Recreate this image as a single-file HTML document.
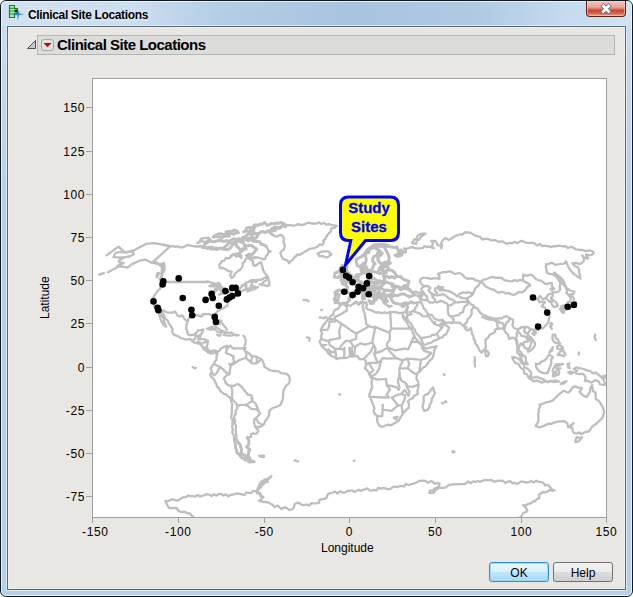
<!DOCTYPE html>
<html><head><meta charset="utf-8">
<style>
html,body{margin:0;padding:0;width:633px;height:597px;overflow:hidden;background:#fff;font-family:"Liberation Sans",sans-serif;}
.abs{position:absolute;}
#win{position:absolute;left:0;top:0;width:631px;height:595px;border:1px solid #101822;border-radius:6px 6px 6px 6px;
 background:linear-gradient(180deg,#d0e0f1 0px,#c4d9ee 60px,#b5d0ea 200px,#b5d0ea 100%);overflow:hidden;}
#tbar{position:absolute;left:1px;top:1px;width:629px;height:24px;background:linear-gradient(95deg,#d2e2f2 0%,#cadcef 22%,#b4cde6 35%,#a9c4df 55%,#afc9e3 75%,#c6dbef 90%,#d2e3f3 100%);}
#hl{position:absolute;left:0;top:0;width:629px;height:593px;border:1px solid #eaf3fc;border-radius:5px;}
#client{position:absolute;left:7px;top:26px;width:617px;height:562px;border:1px solid #5a6878;background:#e8e7e4;box-shadow:0 0 0 1px #dce9f6;}
#client-hl{position:absolute;left:0;top:0;width:615px;height:560px;border:1px solid #f1efea;}
#ttl{position:absolute;text-shadow:0 0 6px #e6f0fa,0 0 3px #eef5fc;left:28px;top:8px;font-size:12px;font-weight:bold;letter-spacing:-0.35px;color:#000;white-space:nowrap;}
#close{position:absolute;left:586px;top:1px;width:38px;height:15px;border:1px solid #5e2015;border-top:none;border-radius:0 0 4px 4px;box-shadow:inset 0 0 0 1px rgba(255,215,205,0.55);background:linear-gradient(180deg,#f0c4bc 0%,#e6a79c 40%,#d66d5a 55%,#c8452e 62%,#d0604a 80%,#e4a090 100%);}
#hdr{position:absolute;left:37px;top:35px;width:576px;height:18px;border:1px solid #b5b5b3;background:#dcdcda;}
#rtitle{position:absolute;left:57px;top:36px;font-size:15px;font-weight:bold;letter-spacing:-0.5px;color:#000;white-space:nowrap;}
#plot{position:absolute;left:92px;top:78px;width:513px;height:438px;border:1px solid #a0a0a0;background:#fff;}
.yl{position:absolute;font-size:12px;color:#000;text-align:right;width:40px;letter-spacing:0.6px;}
.xl{position:absolute;font-size:12px;color:#000;text-align:center;width:40px;letter-spacing:0.6px;text-indent:0.6px;}
.btn{position:absolute;top:562px;width:58px;height:18px;border:1px solid #707070;border-radius:3px;font-size:12px;text-align:center;line-height:18px;color:#000;}
</style></head><body>
<div id="win"><div id="tbar"></div><div id="hl"></div></div>
<div id="client"><div id="client-hl"></div></div>
<div id="ttl">Clinical Site Locations</div>
<div id="close"></div>
<div id="hdr"></div>
<svg class="abs" style="left:0;top:0" width="633" height="60">
<!-- window icon -->
<defs><linearGradient id="mint" x1="0" y1="0" x2="1" y2="0"><stop offset="0" stop-color="#c8f8b8"/><stop offset="1" stop-color="#70e8a8"/></linearGradient></defs>
<path d="M9.5 5.5 H14.5 V8.5 H17.5 V13.5 H14.5 V17.5 H9.5 Z" fill="url(#mint)" stroke="#0c8a1c" stroke-width="1.2"/>
<path d="M10 8.2h4.5M10 11h7M10 14h4.5" stroke="#0c8a1c" stroke-width="1.1"/>
<circle cx="16" cy="11" r="1.4" fill="#000"/>
<path d="M12.6 14.8 L17.4 13.7 L19.3 10.2 L19.1 13.6 L24.4 14.1 L19.1 15.1 L17.5 20.8 L17.5 15.3 Z" fill="#2f7fdc"/>
<!-- close X -->
<path d="M603.4 6 L608.6 11.4 M608.6 6 L603.4 11.4" stroke="#6a6a74" stroke-width="4.4" stroke-linecap="square"/>
<path d="M603.4 6 L608.6 11.4 M608.6 6 L603.4 11.4" stroke="#ffffff" stroke-width="2.8" stroke-linecap="square"/>
<!-- disclosure triangle -->
<path d="M27.5 48.5 L35.5 40.5 L35.5 48.5 Z" fill="#c8c8c8" stroke="#505050" stroke-width="1"/>
<!-- red triangle button -->
<rect x="41.5" y="39.5" width="12" height="11" rx="2.5" fill="#e2e2e0" stroke="#a8a8a8" stroke-width="1"/>
<path d="M43.5 43 L51.5 43 L47.5 47.3 Z" fill="#d00000"/>
</svg>

<div id="rtitle">Clinical Site Locations</div>
<div id="plot"></div>
<svg id="map" width="513" height="438" viewBox="0 0 513 438" style="position:absolute;left:93px;top:79px;overflow:hidden">
<path d="M77.0 167.4L79.9 167.1L82.6 167.9L84.9 167.2L87.0 168.4L89.4 168.4L91.7 167.5L94.4 165.9L97.5 166.7L100.2 167.2L102.8 167.5L105.4 167.5L108.1 167.0L110.5 168.6M138.0 177.1L136.4 179.4L133.0 178.8L131.5 181.5L129.0 182.2L126.3 185.7L127.0 189.2L129.7 189.0L132.1 190.0L135.1 192.1L138.6 192.6L137.2 196.1L138.6 199.0L140.7 197.8L141.5 195.3L143.3 193.5L145.1 191.9L147.1 190.9L149.8 187.4L149.6 184.0L151.8 182.5L152.7 180.0L155.0 179.2L157.3 180.2L160.1 182.2L160.2 186.0L162.5 186.9L165.9 184.1L168.3 183.4L168.8 185.9L169.6 188.3L170.2 191.7L171.7 194.0L173.5 196.1L174.8 197.8L171.8 198.7L169.6 200.0L167.2 200.9L165.0 200.8L162.8 201.6L160.6 200.9L157.5 201.3L155.4 203.2L152.7 203.8L150.9 205.6L148.6 206.6L150.7 205.7L152.5 204.2L154.5 203.2L156.8 202.6L159.2 202.6L159.2 204.7L157.7 206.8L161.6 208.5L163.0 208.9L164.8 208.0L161.9 209.9L159.4 210.6L156.9 211.4L154.6 212.5L154.8 210.4L157.6 209.0L153.5 209.9L149.8 211.6L147.7 212.3L146.3 214.0L146.9 215.4L144.3 216.1L142.1 216.9L139.9 217.5L139.2 219.6L136.5 220.6L134.7 223.7L134.3 226.8L131.8 228.1L130.0 229.5L127.9 230.3L124.1 232.4L122.6 234.6L123.2 238.6L123.6 241.5L122.4 244.1L121.2 244.3L120.5 241.9L119.6 239.3L119.6 236.7L118.2 235.7L115.1 235.1L111.9 235.0L109.3 235.5L109.3 237.4L106.4 237.0L104.2 236.2L101.9 236.4L99.8 237.2L97.4 238.2L95.3 239.8L94.7 242.9L93.3 246.2L93.2 249.7L94.3 252.3L94.7 255.2L96.9 256.2L101.2 255.5L104.0 253.5L104.7 251.4L107.5 251.1L110.4 250.5L109.0 254.0L107.9 255.7L107.3 257.4L106.5 260.0L110.7 260.2L113.9 261.4L115.0 261.9L114.3 266.1L113.8 268.7L115.6 271.3L118.1 272.5L120.7 271.3L123.3 271.8L124.4 273.0L126.7 271.6L127.7 269.5L130.3 268.3L133.8 266.6L134.5 268.7L133.7 270.4L136.3 267.8L137.2 266.8L140.4 269.5L143.9 269.4L147.3 269.4L150.7 269.2L152.2 272.8L155.6 273.9L157.2 275.6L158.9 277.3L162.3 277.3L164.2 278.7L166.5 279.1L169.1 280.8L170.7 284.6L171.5 287.7L174.1 289.4L177.0 291.1L180.1 292.0L183.2 292.0L186.1 292.7L188.5 294.2L191.3 294.3L194.0 295.2L196.1 297.2L196.9 300.7L195.8 304.5L193.3 306.7L190.9 310.2L190.2 313.6L190.1 318.0L189.7 320.1L189.0 322.3L187.6 325.7L184.4 327.5L181.1 328.5L178.5 329.8L176.4 331.8L176.1 336.1L174.1 339.6L172.1 342.2L171.3 344.6L169.6 346.5L167.4 347.9L164.7 347.7L161.9 347.5L163.9 349.9L165.4 350.8L164.5 353.7L162.5 354.9L160.1 354.4L158.0 355.1L158.2 357.7L154.3 358.6M141.2 359.4L140.8 356.3L139.2 353.4L139.9 350.8L139.2 348.2L139.4 345.6L139.6 343.0L139.5 340.7L138.1 338.5L138.4 336.1L138.9 333.5L138.8 330.9L138.8 328.0L139.2 325.1L138.2 322.3L137.7 319.3L134.6 317.1L133.1 315.4L130.8 314.8L129.0 313.4L127.3 311.9L126.2 309.5L124.0 307.7L123.3 305.0L121.9 302.4L120.5 299.8L118.4 298.0L117.2 295.5L118.9 292.0L117.6 289.4L119.3 286.8L121.1 284.8L121.9 282.4L123.7 280.8L123.3 278.1L124.3 275.6L122.3 273.0L119.7 274.7L117.2 274.4L114.7 273.0L112.8 271.3L110.5 270.4L110.2 268.7L107.6 265.4L105.1 264.4L101.0 263.5L99.7 262.6L97.2 260.0L92.9 260.6L89.6 259.5L87.4 259.0L85.7 257.4L81.7 256.1L80.0 254.4L79.0 252.3L79.7 250.4L78.2 247.6L76.8 245.9L75.6 244.0L74.6 241.5L72.7 239.8L70.8 235.8L68.7 232.9L68.0 235.8L69.8 238.4L71.0 240.4L71.0 242.7L72.6 246.2L73.1 247.9L72.0 247.1L69.6 244.8L68.4 242.3L67.4 239.6L66.8 237.5L66.1 235.3L65.5 231.5L64.3 228.9L61.3 227.9L60.9 224.4L61.0 222.3L60.7 218.9L60.4 217.9L62.4 215.1L64.9 211.6L66.7 210.1L67.6 207.8L69.0 204.0M67.7 186.6L65.1 184.3L63.0 183.2L60.7 184.0M166.8 205.4L169.1 204.8L170.6 202.8L172.8 201.9L174.8 198.5L175.7 200.7L176.3 203.0L176.5 205.6L175.1 207.0L171.7 206.4L169.2 206.1L166.8 205.4M159.1 207.1L161.9 207.7L160.3 207.8L159.1 207.1M160.3 201.6L164.0 202.5L162.1 202.8L160.3 201.6M179.1 155.4L181.7 156.9L184.3 157.6L187.4 155.8L189.9 157.2L191.0 160.1L190.3 163.2L191.7 165.6L191.6 168.4L190.8 170.6L188.9 171.9L187.4 173.6L188.3 176.7L189.6 179.6L192.1 180.7L194.7 181.6L196.0 184.3L197.8 182.2L200.0 180.5L201.1 178.5L203.0 177.2L204.3 175.3L207.0 175.8L209.2 174.3L211.4 173.1L214.1 171.5L216.7 169.8L219.5 169.4L222.2 168.8L224.7 167.5L226.6 165.5L229.4 165.8L230.9 163.9L230.2 161.5L232.3 160.3L233.2 158.0L235.6 154.6L237.9 152.4L238.2 149.4L241.4 148.8L243.8 146.8L241.1 146.5L238.5 145.9L235.9 145.1L233.2 145.7L231.1 143.8L228.4 145.0L226.1 143.3L223.6 144.6L221.1 144.3L218.5 144.5L216.0 143.7L213.3 144.5L210.7 145.6L208.1 146.1L205.2 145.1L202.6 146.3L199.9 146.6L197.2 146.1L194.5 145.9L192.3 148.1L188.9 146.7L186.6 148.5M226.7 177.4L224.6 174.5L228.1 172.9L230.7 172.4L233.2 172.4L235.8 172.7L237.5 174.8L238.7 175.3L236.6 176.5L234.6 178.3L231.8 178.1L229.4 176.8L226.7 177.4M169.8 180.5L172.4 179.9L172.9 177.3L174.5 175.7L175.3 173.3L177.7 172.6L175.4 171.6L174.5 169.5L173.4 167.5M162.0 178.8L164.4 178.4L166.7 179.0L168.9 179.6L169.8 180.5M143.3 177.1L146.2 177.2L148.5 179.1L148.1 176.5L146.3 174.5M106.3 163.2L108.4 162.0L110.9 162.7L113.3 162.9L115.2 161.0L117.5 160.6L115.2 158.7L112.2 159.1L109.4 159.2L107.5 160.5L106.4 163.2L104.2 164.1L106.3 163.2M114.0 249.8L116.6 248.7L119.2 247.6L121.8 247.4L124.1 248.6L127.1 250.9L129.3 251.7L131.5 252.8L128.8 253.5L125.9 253.3L123.5 252.2L122.2 250.0L117.9 250.5L114.0 249.8M130.7 255.9L133.8 253.3L136.1 253.9L138.5 253.6L141.0 255.5L138.8 256.6L136.5 256.6L133.6 256.3L130.7 255.9M124.2 255.9L127.6 256.2L126.3 256.9L124.2 255.9M143.0 255.9L145.6 256.1L143.2 256.6L143.0 255.9M126.9 241.4L128.5 241.9L127.0 245.3L126.4 244.1L126.9 241.4M150.3 256.8L151.9 258.1L152.2 259.7L152.6 261.4L152.8 262.8L152.3 264.9L151.4 266.8M150.9 269.2L152.4 269.0L152.3 270.2L150.8 270.2L150.9 269.2M99.6 288.0L101.9 289.3L103.0 288.9M129.6 244.5L130.2 246.2L132.5 248.3L133.8 251.0M166.2 376.7L168.6 377.2L170.9 376.4L170.9 378.1L167.0 377.6L166.2 376.7M201.6 381.4L205.0 382.4L203.9 382.1L201.6 381.4M124.3 274.0L123.3 275.3M133.8 267.3L133.4 269.5L133.5 271.7L132.9 273.9L135.6 275.0L138.2 276.3L140.9 277.3L140.2 279.6L141.1 282.0L140.2 284.2L137.3 286.0L136.5 284.8M121.1 285.1L124.4 286.8L127.3 288.0M118.9 293.8L121.2 296.3L122.9 294.7L124.5 292.9L125.6 290.3L127.3 288.0M127.3 288.0L129.6 289.8L131.4 292.0L133.7 293.9L136.6 295.0M136.6 295.0L136.8 292.7L137.0 290.5L137.5 288.3L137.3 286.0L139.7 285.7L141.6 284.2L144.2 282.4L146.8 280.8L149.9 279.9L152.8 278.7L154.8 280.6L156.8 282.4L158.7 284.2L161.3 284.6L163.9 284.2L166.0 282.3L168.2 280.4M152.8 278.7L153.4 275.9L153.9 273.0M158.9 277.3L158.9 279.6L158.1 281.9L158.7 284.2M164.0 277.8L163.6 280.9L163.9 283.9M136.6 295.0L134.2 296.1L132.2 297.6L130.8 299.8L132.1 301.8L132.7 304.1L134.4 305.5L136.2 306.7L137.9 306.7M137.9 306.7L140.4 306.8L142.5 306.1L144.6 305.0L147.2 306.6L149.3 308.6L151.0 311.0L153.0 313.3L154.8 315.7L158.2 316.2L159.3 318.7L159.2 321.4L158.4 322.5L156.3 323.9L154.1 325.3L151.6 325.7L149.0 325.9L146.6 326.2L144.2 327.1L143.2 324.4L141.1 322.3L139.5 320.4L138.9 318.0L139.3 313.6L139.2 311.3L138.6 309.0L137.9 306.7M137.7 319.3L138.9 318.0M144.2 327.1L144.3 329.6L142.6 331.8L142.8 334.4L141.3 336.8L141.2 339.6L142.2 341.8L141.6 344.3L142.9 346.5L142.9 349.1L142.7 351.7L143.1 354.3L143.4 356.9L143.4 359.4L144.3 361.6L145.5 363.8M151.6 325.7L153.8 326.4L155.7 327.6L157.4 329.3L159.6 330.1L162.7 330.2L165.4 331.8M158.2 316.2L158.6 318.8L159.2 321.4L160.6 323.1L162.6 324.4L163.4 326.6L164.7 329.1L165.4 331.8M165.4 331.8L167.2 334.7L165.5 336.2L164.1 337.9L162.6 339.6L161.7 339.9M161.7 339.9L164.1 340.9L165.1 343.6L167.3 344.8L169.5 346.0M161.7 339.9L160.8 342.7L161.5 345.6M284.4 165.8L287.6 164.8L291.0 165.1M310.1 172.7L312.9 173.6L312.6 171.1L311.0 169.3L314.1 169.8L316.9 168.5L319.7 168.2L322.6 169.3L326.4 169.3L330.0 168.9L331.5 167.0L333.7 168.0L336.2 167.7L338.5 168.4L340.8 169.3L338.8 167.2L340.2 163.9L338.2 161.8L342.4 161.8L343.6 163.9L344.7 166.1L347.7 166.7L348.3 169.3L349.2 166.6L348.1 164.1L350.4 160.6L352.8 159.1L355.6 161.1L358.0 159.8L360.0 158.5L361.9 157.1L364.1 156.3L366.6 155.5L369.4 155.6L371.4 153.5L374.4 153.5L377.3 153.7L380.0 155.3L382.3 156.7L385.0 157.3L387.5 158.3L389.2 160.6L391.6 159.9L393.9 159.8L396.2 160.4L398.4 161.5L400.8 161.2L403.1 161.4L405.3 162.9L407.7 162.4L410.1 162.7L412.1 164.1L414.3 164.9L416.7 163.8L419.2 164.1L421.5 163.0L424.1 164.1L426.2 162.9L428.3 161.8L430.8 162.7L432.8 163.8L435.2 163.8L437.4 164.1L439.9 163.7L442.1 164.9L444.3 166.6L447.0 164.8L449.0 167.2L451.6 166.6L453.9 167.2L456.1 167.2L458.3 168.2L460.6 167.0L462.8 167.4L465.5 166.7L467.8 166.9L470.1 167.5L472.4 167.2L475.0 169.0L478.1 167.8L480.9 168.8L482.8 170.3L485.1 170.6L487.3 171.0L489.7 171.0L491.8 171.9L494.2 171.8L496.6 171.4L498.8 172.0L501.0 173.4L499.6 175.3L496.4 176.5L493.1 175.3L493.5 177.8L495.2 179.6L492.8 179.1L490.6 178.2L489.1 176.2L491.2 179.6L490.6 182.2L488.8 184.0L486.1 185.1L483.3 184.0L479.4 184.1L480.8 186.2L482.7 187.5L485.0 188.3L486.0 190.9L486.2 193.7L486.9 196.4L487.5 199.5L485.0 198.1L482.9 196.1L480.7 194.6L478.9 192.9L477.2 190.9L475.3 187.8L474.1 185.0L473.0 182.2L471.7 184.3L469.3 184.8L466.8 185.2L464.3 185.3L462.1 186.0L459.9 184.0L457.6 183.9L455.4 185.1L453.1 185.2L452.9 188.3L453.7 190.8L453.7 193.5L456.4 195.1L459.6 195.2L463.0 197.5L464.6 199.4L466.0 201.6L467.2 203.8L466.8 208.2L467.1 210.7L465.3 212.5L463.2 213.3L460.9 213.4L458.9 214.6L459.9 216.8L458.3 218.5L458.0 219.4L459.9 220.8L461.7 222.3L463.5 223.7L464.9 226.8L460.9 228.1L458.9 225.8L458.4 222.9L456.2 222.5L454.7 220.7L453.3 218.9L449.7 220.3L447.1 217.0L444.8 219.9L442.8 220.3L445.6 220.7L446.5 223.4L449.3 222.6L452.0 223.2L450.0 225.5L448.8 227.2L451.8 228.5L453.1 231.5L455.9 233.8L456.6 237.6L455.8 240.2L455.2 243.6L453.7 245.6L451.8 247.1L450.1 249.4L447.2 249.1L445.3 251.2L442.5 250.5L441.6 252.6L440.1 250.4L437.5 250.5L435.8 253.1L434.6 255.2L436.2 257.4L438.4 258.7L439.8 260.9L441.6 263.4L442.0 266.4L440.3 269.0L437.9 271.3L435.1 272.8L435.3 270.4L432.7 269.5L430.7 267.0L427.7 264.5L426.4 267.0L425.4 270.4L427.5 273.0L429.7 275.9L432.8 278.5L432.9 281.0L433.4 283.4L434.7 285.3L433.1 285.1L429.7 282.9L428.8 280.7L427.8 278.7L426.7 275.9L424.4 273.9L424.2 270.4L424.5 267.8L423.8 265.2L423.3 262.0L421.6 259.2L418.8 258.7L416.3 260.0L415.5 257.9L415.1 255.7L413.2 254.0L411.7 251.9L410.0 248.8L408.0 249.7L404.6 249.7L402.2 250.5L401.8 253.1L398.7 254.9L396.5 256.0L395.4 258.3L392.3 260.9L392.6 265.2L393.0 267.6L392.3 269.9L390.2 271.5L388.6 273.7L386.4 271.3L385.3 268.6L383.8 266.1L382.1 264.4L382.2 261.8L380.7 260.0L380.4 257.2L379.0 254.9L378.4 251.4L377.9 249.1L374.7 251.7L371.7 249.1L373.4 248.1L370.8 247.1L368.0 244.8L367.0 243.8L364.3 243.7L361.6 243.6L358.9 244.1L356.5 243.3L353.9 244.0L351.6 243.1L349.6 240.8L345.9 241.5L343.6 240.5L341.3 239.5L339.0 235.8L336.0 235.8L335.3 236.9L336.8 238.9L338.3 241.0L341.0 244.5L342.1 242.9L341.7 245.3L344.0 246.2L346.4 246.0L348.3 244.7L349.4 242.7L350.0 242.2L350.3 245.0L354.0 246.9L356.4 248.8L354.6 252.3L353.2 255.2L350.9 256.3L349.3 258.3L346.8 259.3L344.4 260.6L341.2 261.5L338.6 263.5L335.6 264.3L332.8 265.6L329.9 265.7L329.6 263.2L328.6 260.9L326.4 257.4L324.5 255.4L322.7 253.3L321.7 250.5L320.0 248.8L319.0 246.6L318.0 244.5L315.5 242.2L314.1 239.1L313.9 236.7L313.5 239.3L312.0 239.6L309.9 236.0L309.2 233.6L312.7 233.2L313.2 230.6L314.4 228.1L314.0 226.3L314.0 224.1M309.9 236.0L309.2 233.6L305.4 233.8L302.7 233.2L299.9 233.2L297.2 232.9L294.6 234.1L291.7 233.3L289.1 234.3L286.7 233.5L284.1 233.5L281.6 233.1L279.6 232.0L277.5 231.0L275.0 230.3L272.8 228.4L274.0 226.0L273.1 223.7M261.1 224.1L259.2 225.6L257.3 226.8L254.7 226.0L252.3 226.7L250.1 224.9L247.8 225.6L246.3 228.1L244.7 229.9L242.4 230.6L240.8 232.4L240.2 235.8L237.9 236.7L236.6 238.7L234.8 240.2L233.5 242.3L231.9 244.2L230.4 246.2L228.8 248.7L227.8 251.4L229.0 254.0L228.3 257.0L228.4 260.0L226.6 262.3L227.9 266.1L230.2 268.7L233.3 271.3L234.8 273.6L236.7 275.6L238.8 277.3L241.6 278.0L243.5 280.1L246.0 279.2L248.6 279.0L251.2 279.1L253.5 278.9L255.7 277.7L258.0 277.5L261.0 277.3L264.0 276.8L266.6 280.3L270.8 279.9L272.6 281.6L273.1 286.0L271.7 289.4L273.9 291.0L275.4 293.0L276.5 295.5L279.0 298.1L279.1 300.7L278.5 303.3L278.7 305.9L279.4 308.4L278.1 310.9L277.1 313.5L276.3 316.2L277.4 318.2L278.0 320.5L278.9 322.6L279.8 324.8L280.6 326.9L281.5 329.3L280.6 332.0L281.5 334.4L283.3 336.3L284.3 338.7L284.2 341.5L284.8 344.0L286.1 346.5L288.6 347.9L292.8 346.5L295.3 345.7L297.8 346.5L299.8 345.2L301.9 344.1L304.1 342.6L306.1 341.0L307.3 338.7L308.7 336.5L310.2 334.4L311.7 332.4L313.4 330.6L315.6 329.2L315.9 324.9L314.8 322.3L317.8 319.9L320.0 319.1L321.1 316.8L323.2 315.9L324.9 314.5L324.5 311.6L325.3 308.7L325.5 305.9L325.1 302.6L323.4 299.8L323.9 295.7L324.9 293.5L327.2 292.4L328.2 290.3L329.9 288.8L332.0 287.7L333.5 286.0L335.0 284.2L336.4 281.7L338.9 280.0L340.1 277.3L340.9 274.8L341.1 272.1L342.0 269.5L343.6 267.3L340.8 267.8L338.0 268.3L335.5 269.1L333.0 269.7L330.0 267.8L328.5 265.2L326.1 263.3L324.1 260.9L322.2 259.1L321.3 256.6L319.9 254.1L318.9 251.4L317.4 248.8L315.8 247.3L314.7 245.3L313.7 242.9L311.8 241.0L310.1 238.8L309.9 236.0M294.2 226.3L296.3 228.1L298.7 226.8L295.9 227.4L294.2 226.3M308.5 227.2L312.0 226.2L310.5 227.9L308.5 227.2M328.6 210.8L328.2 210.2L328.9 208.9L331.6 207.3L334.4 206.8L337.4 209.0L335.4 211.1L336.9 213.2L338.9 214.7L339.6 218.5L340.0 216.0L340.3 218.5L342.0 220.4L342.5 222.9L339.8 223.5L337.1 223.7L334.2 221.3L334.2 217.7L332.5 216.1L331.0 214.2L329.8 212.5L328.6 210.8M345.2 207.3L347.5 208.5L350.1 208.2L348.9 211.6L346.3 210.8L345.2 207.3M268.3 152.0L270.9 150.9L273.3 149.4L275.7 148.9L278.1 149.0L280.4 148.5L282.8 149.0L281.8 151.5L279.2 152.0L277.4 154.6L274.3 155.3L272.7 153.3L270.0 153.6L268.3 152.0M319.1 164.1L321.0 160.6L323.7 159.5L324.6 156.6L327.1 155.3L329.7 154.7L332.4 154.7L330.1 156.4L327.8 158.0L326.4 160.4L323.8 161.5L323.1 164.9L319.1 164.1M473.2 208.2L471.9 205.7L471.0 203.0L469.8 200.7L468.0 199.1L466.2 197.4L464.3 195.9L462.4 194.3L461.2 193.8L462.2 196.1L463.7 198.1L465.8 199.5L467.5 201.9L469.1 204.4L471.2 206.4L473.2 208.2M475.5 216.0L473.5 214.1L474.2 211.3L472.9 209.2L475.1 209.9L477.0 211.4L479.2 212.0L481.5 212.5L480.3 215.1L476.6 215.4L475.5 216.0M477.3 216.3L479.5 217.4L480.9 219.4L480.9 222.0L483.1 223.4L482.9 226.0L482.0 227.2L480.7 227.9L477.8 227.9L476.3 229.8L474.6 227.9L471.6 228.4L468.6 228.9L468.0 227.5L470.6 226.3L474.9 226.0L474.8 223.0L477.4 222.9L477.8 219.4L476.1 216.8L477.3 216.3M467.0 229.8L469.8 229.8L471.0 233.6L469.6 233.8L467.6 231.0L467.0 229.8M471.6 230.3L474.6 228.9L474.5 230.1L472.8 231.0L471.6 230.3M457.2 247.9L457.8 244.0L459.5 244.7L457.9 247.1L458.8 249.8L457.2 247.9M439.4 254.3L442.1 252.9L443.1 253.8L441.0 256.2L439.4 254.3M459.3 259.2L459.7 255.7L462.4 255.7L462.7 259.2L464.9 260.2L465.6 262.6L466.9 264.4L462.6 263.8L460.7 262.6L459.3 259.2M464.7 275.6L466.3 273.7L468.0 272.0L470.3 270.9L470.8 273.3L472.5 275.1L470.8 277.3L468.1 276.1L464.7 275.8L464.7 275.6M463.9 267.3L467.1 266.1L470.0 268.7L466.8 270.4L464.2 269.5L463.9 267.3M456.3 273.2L459.2 271.5L459.7 268.2L458.8 269.9L456.3 273.2M442.9 284.6L446.3 285.1L447.5 283.1L449.7 282.2L452.0 281.0L453.8 279.1L456.1 275.6L458.4 276.7L459.8 278.7L458.2 280.3L458.3 284.2L457.5 286.8L456.5 288.9L455.7 291.2L454.8 293.8L452.2 294.3L449.6 293.9L447.1 292.9L444.6 290.3L443.0 287.7L442.9 284.6M419.2 278.0L423.0 278.7L425.5 279.7L427.3 281.4L428.3 283.9L430.8 285.1L431.3 288.5L434.0 289.4L435.9 291.2L437.7 292.9L438.3 295.4L437.2 297.7L434.9 297.7L433.9 295.2L431.3 294.6L431.1 291.3L428.4 289.4L426.7 287.2L425.3 284.8L422.3 283.9L420.5 281.3L419.2 278.0M436.0 299.5L437.5 298.1L441.4 298.6L443.7 297.8L446.0 298.8L448.5 299.6L451.8 301.0L451.5 302.7L448.8 303.6L446.5 302.5L444.1 301.7L440.9 302.3L438.2 300.5L436.0 299.5M452.6 302.0L454.2 302.9L456.7 301.9L459.4 302.4L461.9 301.5L464.5 302.0L466.2 302.6L463.6 302.6L461.0 303.1L458.0 302.0L455.0 303.3L452.6 302.0M467.7 305.0L470.9 304.3L473.5 302.2L470.4 303.3L467.7 305.0M459.8 297.2L460.6 293.8L459.6 292.2L460.3 289.8L461.5 287.7L462.6 285.6L465.1 285.1L467.6 285.2L470.1 284.9L467.6 285.9L465.0 286.7L462.3 286.8L463.5 289.4L467.4 289.3L464.3 291.2L466.3 292.9L465.8 295.5L464.1 296.0L462.5 292.5L463.0 295.0L462.1 297.4L459.8 297.2M474.6 285.1L476.3 284.2L475.5 287.7L476.8 289.1L475.2 288.6L474.6 285.1M475.3 293.4L477.6 295.0L480.1 293.8L477.9 292.5L475.3 293.4M480.6 289.9L483.0 288.4L485.8 289.1L488.7 289.7L491.7 290.3L494.5 291.6L497.6 292.2L499.7 294.3L503.0 293.6L505.2 295.5L508.4 298.1L510.0 299.7L511.1 301.7L511.8 303.8L512.7 305.9L509.8 305.7L506.9 305.3L505.4 302.2L502.1 301.2L498.5 303.6L495.2 302.0L491.8 302.2L492.7 299.2L491.5 296.3L489.7 294.7L487.2 295.1L483.0 294.6L482.2 292.7L484.3 291.7L480.6 289.9M510.2 297.2L512.8 296.3L516.3 295.0L515.3 297.2L513.4 298.9L510.9 298.4L510.2 297.2M446.5 325.7L447.0 328.1L445.7 330.3L445.8 332.7L445.1 335.7L445.6 338.7L445.2 343.0L443.8 345.0L442.5 347.0L446.6 348.4L449.6 347.4L452.5 346.1L455.1 344.7L458.0 344.8L461.8 343.4L464.5 342.7L467.2 342.3L471.3 342.2L474.4 344.4L475.2 348.2L477.5 347.4L479.2 345.9L480.7 344.1L478.3 345.7L476.7 348.2L479.4 349.1L479.8 352.5L481.3 354.1L484.0 354.5L486.5 353.4L488.2 355.3L490.5 354.0L492.9 352.9L495.6 352.5L498.3 349.1L499.9 346.9L502.3 345.6L504.1 343.9L506.0 342.4L507.6 340.4L509.4 338.8L510.1 336.5L510.9 334.2L510.9 331.8L510.1 329.1L508.8 326.6L506.7 323.1L505.0 321.3L502.7 320.2L502.6 316.9L502.7 313.6L499.9 311.9L499.6 309.0L499.1 306.2L497.0 309.8L497.2 312.3L496.0 314.5L493.6 318.0L491.2 317.1L488.3 315.0L486.5 312.8L488.0 311.1L488.8 309.0L485.9 308.8L482.0 307.4L479.1 308.8L477.9 311.3L475.9 313.3L473.4 313.1L471.1 311.6L468.2 313.6L465.2 316.2L462.5 318.8L460.0 321.4L456.0 322.8L452.0 323.7L448.4 325.4L446.5 325.7M483.8 358.1L486.5 358.9L489.2 358.4L487.3 360.2L485.8 362.4L482.2 363.1L482.7 360.5L483.8 358.1M392.4 270.8L394.6 272.3L396.0 274.7L394.7 277.3L393.0 277.2L392.3 274.0L392.4 270.8M340.2 308.4L340.8 311.5L341.9 314.5L339.9 318.0L338.6 320.4L338.4 323.4L336.7 325.7L336.3 328.6L334.6 330.9L331.2 331.8L330.3 329.6L329.4 327.5L330.2 324.9L330.8 322.3L330.6 319.7L330.7 317.1L332.7 315.6L335.1 314.8L336.6 313.0L337.8 311.0L340.2 308.4M105.0 439.0L102.3 439.4L100.5 437.8L98.5 436.5L96.8 434.3L94.3 434.3L92.4 432.8L89.8 433.0L87.4 432.8L85.3 431.9L83.8 429.1L81.4 428.9L78.8 429.1L76.4 429.0L74.7 426.9L73.5 424.5L72.3 422.0L74.9 422.2L77.3 421.1L79.7 420.3L82.4 421.1L85.0 421.5L87.4 420.0L89.9 418.3L93.0 418.1L95.2 416.5L97.6 417.1L99.9 417.1L102.3 417.6L104.5 416.0L106.9 417.4L109.2 417.0L111.5 416.1L113.7 415.1L116.1 415.6L118.5 417.0L120.9 415.2L123.3 416.6L125.7 415.0L128.1 415.1L130.5 416.6L132.9 415.3L135.2 417.2L137.7 416.0L139.9 415.7L142.1 414.7L144.4 414.5L146.8 414.8L149.1 415.3L151.5 415.9L153.6 413.4L155.9 413.8L158.3 413.9L160.4 411.9L163.9 412.4L165.8 409.9M170.2 402.0L172.1 400.5L174.9 400.4L176.9 399.1L178.4 397.0L176.5 398.5L174.6 400.0L174.4 402.7M170.0 418.1L168.3 420.3L166.0 422.0L168.4 422.4L170.7 423.0L173.1 423.2L175.5 423.5L177.6 424.9L179.8 425.8L181.6 428.1L184.5 426.6L186.5 428.3L188.7 430.0L191.6 428.3L194.0 429.1L196.2 430.8L198.9 430.3L200.9 428.8L201.3 426.2L202.7 424.3L205.8 423.7L208.3 425.5L211.0 426.2L213.4 425.5L216.1 426.6L218.2 424.2L220.7 424.3L223.2 424.3L225.8 423.9L226.6 420.6L229.2 420.2L231.8 419.8L233.8 418.4L234.7 415.4L236.7 414.1L239.5 413.9L241.8 412.4L244.6 414.5L246.8 412.4L249.4 413.5L252.0 413.7L254.3 411.8L256.8 412.0L258.9 411.2L261.3 413.0L263.4 411.9L265.6 410.8L267.8 411.9L270.0 410.6L272.2 410.3L274.3 409.4L276.7 411.4L278.9 411.7L281.1 410.8L283.3 411.5L285.4 408.8L287.7 409.9L289.9 408.9L292.3 409.3L294.8 410.4L297.2 410.1L299.3 408.3L301.6 407.6L304.0 408.0L306.2 407.3L308.4 406.9L311.0 407.5L312.7 404.9L315.3 406.0L317.5 405.3L319.7 404.9L321.9 404.2L324.0 403.2L326.0 401.9L328.4 401.8L330.7 401.7L333.0 402.2L335.1 403.8L337.7 402.2L339.9 402.9L342.0 404.8L344.5 403.8L346.6 404.9L345.7 407.3L344.1 408.9L341.4 409.3L340.1 411.3L337.2 411.4L336.3 413.9L339.0 414.1L341.3 413.5L342.9 410.8L345.0 409.5L347.2 408.7L349.9 408.9L352.4 408.7L354.4 407.1L356.4 405.7L358.9 405.6L361.2 405.1L363.7 405.4L366.0 405.2L368.4 405.1L370.8 405.1L373.0 404.3L375.2 402.5L377.8 404.2L379.9 402.4L382.4 402.9L384.7 402.0L387.1 402.8L389.4 401.8L391.7 401.0L394.0 401.1L396.3 401.1L398.6 400.8L401.0 402.9L403.3 402.0L405.6 401.8L407.9 401.6L410.2 402.0L412.3 403.9L414.7 402.7L417.1 402.2L419.2 404.0L421.5 403.8L423.7 405.0L426.1 403.9L428.4 402.4L431.0 403.0L433.6 403.5L436.1 403.2L438.4 401.8L440.5 403.5L443.4 401.7L445.6 402.9L448.1 403.0L450.4 403.8L452.2 406.5L454.9 405.8L457.0 407.8L458.6 410.4L461.6 411.3L459.3 412.0L456.7 411.0L454.6 412.5L452.3 413.4L449.9 413.0L447.8 414.4L445.9 415.9L446.3 419.1L443.8 420.1L442.5 422.0L439.9 422.5L437.8 424.4L435.2 424.9L432.9 426.3L430.1 426.2L432.2 427.7L433.5 429.8L434.3 432.2L432.1 433.3L429.9 434.6L428.4 437.0L426.6 438.8L423.7 439.0M502.8 260.9L501.4 258.3L502.2 255.7M485.7 275.6L486.0 273.5M246.3 315.0L247.0 315.5M260.8 381.6L261.5 381.9M350.7 295.3L351.7 296.0M349.2 324.0L349.8 324.4L352.9 322.3L353.3 323.0M381.6 278.2L381.9 280.8L381.6 283.4L382.0 287.7M214.0 258.3L216.5 259.2L216.3 261.8M226.6 238.4L229.0 238.9L230.7 239.3L233.5 237.9M210.5 221.0L213.1 220.8L215.6 222.3M228.3 231.2L229.1 231.0M359.7 372.1L361.6 372.8L359.9 373.5L359.7 372.1M318.2 212.5L320.2 213.8L322.8 212.4L324.7 213.9L327.2 213.3L328.9 215.3L332.1 215.4M321.5 215.8L324.5 216.6L327.1 219.1L327.9 223.4L324.2 223.4L320.4 224.1M315.6 224.4L314.2 225.6M324.5 216.6L326.9 216.4L329.2 216.5L327.5 219.4L329.3 220.6L332.6 221.1M327.9 223.4L329.6 226.3L330.3 228.7L331.9 230.6L333.7 232.9L335.1 235.3M335.3 236.9L332.9 237.4L329.6 237.2L327.7 235.1L325.1 233.9L322.5 233.0L319.9 232.0M324.1 223.4L324.4 225.9L322.9 228.1L322.0 230.5L319.9 232.0M319.9 232.0L316.8 233.2L318.7 235.0L316.3 235.8L313.9 236.9M314.2 230.3L314.4 233.2L313.9 236.7M314.3 227.9L315.2 227.9L314.2 230.3M329.0 258.8L332.0 258.5L334.9 257.8L337.3 257.7L339.2 255.7L341.7 255.8L343.9 254.9L345.5 252.6L347.4 250.6L349.2 248.5L349.8 246.2M342.2 245.3L344.8 245.9L347.0 247.1L349.2 248.5M345.9 258.8L344.9 256.8L343.9 254.9M342.4 223.2L344.9 223.3L347.1 222.0L349.7 222.3L351.8 223.7L354.1 224.6L354.8 226.2L355.0 229.8L354.9 233.0L355.8 236.2L358.1 237.9L361.0 240.7L358.9 244.1M354.8 226.2L357.5 226.3L359.8 224.9L362.5 223.0L365.1 223.7L367.7 222.8L370.4 222.9L373.1 222.7L375.5 223.7M356.4 236.7L358.8 237.3L361.1 237.2L363.4 236.3L365.7 236.2L367.4 234.1L370.0 233.2L370.8 229.8L371.7 227.2L374.1 226.0L375.5 223.7M370.2 246.7L371.8 245.0L373.6 243.6L374.7 240.2L377.1 238.0L378.6 235.0L378.5 231.5L379.7 229.4L380.6 227.2M380.3 226.3L381.8 228.4L384.4 229.4L385.8 231.5L387.3 233.8L389.4 235.5L392.3 236.4L394.9 238.1L397.2 238.4L399.4 239.5L401.8 239.5L404.0 240.0L406.3 239.1L408.5 239.6L410.8 237.8L413.7 237.2L417.1 239.3M389.1 238.1L391.3 238.7L393.3 239.6L395.4 240.3L397.9 240.7L400.4 240.8L402.7 241.9M403.3 242.2L404.4 244.6L404.4 247.3L405.5 249.7M411.3 251.4L411.6 248.7L410.7 246.2L409.5 244.1L407.2 243.8L405.4 242.2M411.3 251.4L411.9 248.8L412.4 246.2L413.6 243.6L415.8 241.8L417.1 239.3M417.1 239.3L419.8 240.6L420.2 243.6L419.4 246.2L421.0 249.0L424.0 250.2L426.4 249.7L427.9 248.5L431.9 247.9L435.2 248.2L437.5 250.5M424.2 270.4L424.5 267.5L424.3 264.6L424.2 261.8L422.9 259.2L423.9 257.0L423.6 254.5L424.7 252.4L425.7 250.5M424.7 252.4L426.8 254.3L428.4 256.6L430.6 257.3L432.8 257.4L434.2 259.9L435.3 262.6L432.7 262.6L430.3 263.5L430.7 267.0M431.9 247.9L431.7 250.1L431.1 252.3L432.6 253.9L435.0 254.8L435.3 257.4L436.7 260.2L438.7 262.6L437.8 265.7L436.8 268.7L434.4 269.7M427.5 276.5L430.8 277.0M387.5 202.6L389.8 203.9L391.3 206.2L393.2 207.8L395.5 209.0L398.1 210.1L400.8 210.7L403.0 212.5L405.5 213.7L408.2 212.9L410.7 213.3L413.1 214.5L415.7 213.9L418.1 215.3L420.6 215.8L423.3 215.0L425.5 212.8L428.6 213.4L430.8 212.4L432.5 210.8L434.3 207.9L437.4 206.4L435.8 204.9L433.9 203.6L431.9 202.8L430.0 201.6M387.5 202.6L389.7 200.9L392.5 200.4L394.9 199.5L397.3 198.5L399.8 197.8L402.9 198.9L406.2 198.7L408.6 198.8L410.5 200.6L412.7 201.5L415.0 201.8L417.4 202.1L419.6 202.3L421.7 201.0L424.1 202.0L426.2 200.9L430.0 201.6M430.0 201.6L430.1 198.6L430.2 195.5L432.5 196.5L434.9 196.6L437.3 195.7L439.6 196.4L441.4 198.4L443.3 200.2L445.8 201.3L448.2 201.6L450.0 203.0L451.7 204.6L453.9 205.2L456.2 204.2L458.7 204.2L459.1 207.4L461.2 209.9L457.4 209.9L459.2 211.5L460.0 213.9L459.7 214.4M459.7 214.4L456.1 215.1L454.1 216.8L452.7 218.9M457.5 222.3L460.5 221.1M387.5 202.6L385.9 206.4L382.5 209.0L381.3 211.2L380.9 213.7L379.2 216.1L376.7 217.7L373.4 219.4L374.8 221.3L376.1 223.2L377.8 225.3L380.3 226.3M331.6 207.3L329.3 205.9L327.6 203.8L326.9 201.3L328.6 199.6L330.7 198.5L333.0 199.0L335.4 199.2L337.6 200.0L339.8 199.3L342.0 199.4L344.2 199.4L346.4 199.9L346.4 197.1L345.1 194.7L347.7 194.1L350.1 193.0L353.2 193.2L356.2 192.3L358.5 192.6L360.2 194.4L362.5 194.9L366.4 194.0L368.8 195.0L370.4 197.0L372.3 198.6L374.5 199.9L377.3 199.5L380.2 199.5L382.1 201.1L384.5 201.7L386.7 202.6M338.9 214.7L341.5 215.6L344.1 216.3L344.0 213.8L342.1 211.9L342.1 209.4L345.8 209.0L347.7 210.7L350.2 210.9L353.1 211.7L356.0 212.1L358.8 213.4L361.5 215.2L364.0 217.3L366.9 214.6L370.4 213.4L373.0 213.9L375.7 213.2L378.3 214.4L380.9 213.7M344.1 216.3L347.0 215.8L350.0 215.1L352.1 216.2L353.9 217.7L355.8 219.4L358.3 220.3L360.6 221.3L362.5 223.0M366.7 218.2L369.5 219.2L372.6 219.4M77.0 167.4L59.5 183.4L66.5 185.7L70.6 184.3M72.3 203.0L113.9 203.0L114.2 202.3L121.5 204.7L127.8 207.3L130.1 209.4L127.9 214.2L133.5 213.7L138.7 212.3L141.6 209.9L146.6 209.9L149.1 207.3L151.7 205.8L153.4 205.9L152.8 208.5L153.4 210.1M65.5 231.5L69.5 231.2L74.6 233.6L79.2 233.6L82.3 232.7L84.3 236.4L86.5 237.6L89.3 236.2L91.6 240.2L94.7 242.9M116.6 207.0L121.1 205.6L125.7 203.8L127.8 206.4L124.8 207.3L119.5 207.3L116.6 207.0M119.2 215.1L121.8 210.2L125.9 208.2L125.1 209.9L122.4 212.5L119.2 215.1M127.4 208.2L132.1 209.6L128.2 213.4L127.4 211.6L127.4 208.2M125.7 215.6L133.5 213.7L131.8 214.2L125.7 215.6M132.6 212.8L138.7 212.3L137.4 211.6L132.6 212.8M99.9 262.6L100.0 261.2L102.2 260.0L102.7 256.9L105.9 256.9L107.4 255.7M105.9 256.9L105.2 260.4L106.9 260.6M103.5 264.0L104.8 262.8L107.4 263.8M108.0 265.2L111.2 263.5L115.0 261.9M110.4 268.3L113.8 268.7M114.8 273.5L115.4 271.3M253.6 227.2L253.9 231.5L248.1 235.0L241.9 238.1L241.9 240.2M241.9 240.2L234.8 239.8M241.9 240.5L241.8 242.7L236.4 242.7L236.2 247.1L234.5 250.9L227.8 250.9M241.9 240.5L248.3 244.5L246.2 252.3L247.0 259.2L236.8 260.9L235.6 262.3L228.4 260.0M248.3 244.5L258.0 251.4L263.4 254.5M263.4 254.5L276.4 247.1L279.7 248.3L282.2 247.9M282.2 247.9L296.7 254.0L296.7 253.1L298.2 249.7L297.2 233.1M298.2 249.7L318.1 249.7M270.1 223.9L269.6 228.1L271.9 235.5M271.9 235.5L273.3 245.3L276.4 247.1M282.2 247.9L281.5 252.3L279.2 263.5L280.1 265.2M260.9 276.8L262.4 267.5L267.3 264.4L272.4 265.6L279.2 263.5L281.0 266.1L277.6 273.0L270.8 279.6M281.0 266.1L282.7 270.4L281.1 274.7L284.5 283.9M282.8 273.9L288.7 272.1L294.6 268.7L296.4 272.1M294.6 268.7L293.7 265.2L296.9 260.6L296.7 254.0M294.6 268.7L302.3 271.3L312.5 269.5L315.1 270.4L318.3 263.5L321.3 256.6M318.2 263.0L324.2 262.6L328.6 266.1M328.7 268.7L331.4 272.1L338.2 273.9L333.3 279.1L328.0 280.8L326.5 290.6M328.0 280.8L317.9 279.9L314.5 279.6M314.5 279.6L309.3 281.3L303.3 279.1L297.3 273.0M303.3 279.1L295.6 279.6L289.7 279.1L288.0 281.6L284.5 283.9M284.5 283.9L279.4 283.9L275.6 283.9L272.9 286.0M275.6 283.9L280.3 291.2L276.0 295.5M288.0 281.6L286.3 289.4L282.8 295.1L277.3 298.1M277.3 298.1L284.5 300.7L293.0 299.8L293.8 306.7L297.2 306.7M297.2 306.7L303.9 308.4L305.6 310.9L306.5 308.4L304.9 302.4M304.9 302.4L306.8 295.5L306.3 290.3L307.7 286.0L309.4 283.4L309.3 281.3M314.5 279.6L316.2 285.1L314.5 289.4L320.5 293.8L323.9 295.7M307.7 289.4L314.5 289.4M305.9 295.5L308.7 302.0L312.6 304.1L315.0 307.6L320.1 307.6L325.3 305.9M276.2 317.6L290.1 318.5L296.0 318.3M289.8 325.7L289.6 330.6L289.3 337.0L283.5 337.1M289.6 330.6L298.7 331.8L304.9 326.3M298.8 318.5L304.9 326.3L308.7 326.4L311.6 320.5L312.0 316.2L307.9 315.0L303.7 316.2L298.8 318.5M293.8 306.7L297.1 310.2L293.5 315.9L296.0 318.3M308.7 326.4L309.4 334.0M312.6 304.1L314.1 308.4L316.5 312.8L315.5 317.1L313.1 312.8L311.8 311.0M307.9 315.0L311.8 311.0M300.8 338.7L304.6 337.8L303.1 340.4L300.8 338.7M235.6 262.3L236.9 266.3M236.9 266.3L241.8 269.5L242.6 273.0M242.7 269.9L246.9 269.7L251.5 271.1M246.9 269.7L247.8 267.0L252.9 261.9L256.6 261.9L258.8 264.9L260.4 267.1M251.2 279.1L251.5 268.7M257.2 277.3L256.3 268.7M258.9 277.0L258.9 268.7M263.4 254.5L263.1 260.0L256.6 261.9M236.7 275.6L238.4 273.0L242.6 273.0L243.5 280.1M233.3 271.3L235.8 270.4L237.5 273.0M227.9 266.1L233.3 266.1M13.3 176.4L25.5 167.7L32.2 173.6L40.9 171.2L53.0 164.9L61.4 164.1L76.6 167.0M32.2 173.6L26.7 172.8L22.7 174.0L21.2 176.0M32.2 173.6L40.1 172.4L40.9 175.2L36.2 177.5L30.6 178.3L23.5 178.3L20.4 177.9M30.6 179.1L26.7 180.7L25.9 183.1L30.6 183.9L24.3 187.0L26.7 187.0M58.9 184.0L53.0 180.7L47.2 181.5L38.5 185.4L34.6 188.6L26.7 187.0L14.8 193.3M10.9 194.1L6.2 195.7" fill="none" stroke="#bebebe" stroke-width="2.3" stroke-linejoin="round" stroke-linecap="round"/>
<path d="M110.5 168.6L112.9 169.1L115.6 168.3L117.8 170.1L120.3 169.9L122.9 168.9L125.4 170.1L127.9 169.1L130.2 170.2L132.7 170.5L135.7 170.3L138.0 168.4L139.1 166.0L141.0 164.6L143.2 163.6L143.1 166.7L146.1 169.3L147.4 171.0L150.1 169.6L152.3 167.5L153.1 170.1L150.4 170.2L148.9 172.3L146.9 173.6L144.9 175.1L142.5 176.2L140.0 175.3L138.0 177.1M154.3 358.6L155.9 361.2L155.8 365.5L153.7 368.1L156.9 370.7L155.6 372.6L155.6 375.0L155.3 377.6L156.4 378.5M156.5 378.6L158.0 381.9L161.2 382.8L158.8 382.8L156.4 383.1L154.5 381.1L151.8 381.1L154.6 379.3L156.5 378.6M156.4 378.5L153.0 379.0L150.6 379.2L148.4 378.5L146.6 375.9L144.1 374.1L143.6 371.5L142.6 369.0L142.5 366.3L142.1 363.8L141.6 361.6L141.2 359.4M69.0 204.0L71.3 204.4L72.3 203.0L70.5 201.3L68.2 199.5L68.9 196.9L68.9 193.5L69.1 191.7L69.5 188.3L67.7 186.6M71.1 204.0L68.4 203.2L66.7 199.9L70.8 200.9L71.1 204.0M63.8 197.8L64.6 194.3L66.0 194.3L63.8 197.8M176.0 152.8L179.1 155.4M186.6 148.5L184.3 149.1L182.6 151.2L180.2 151.8L177.8 152.0L176.0 152.8M173.4 167.5L170.7 165.8L168.1 165.2L166.6 162.7L163.9 162.4L160.5 162.2L157.8 160.3L155.3 162.0L152.2 159.8L149.7 161.5L150.6 164.1L151.7 166.7L155.4 166.7L157.8 166.1L159.8 167.5L161.7 168.9L163.8 170.1L161.4 173.1L159.3 175.4L156.0 175.3L153.4 176.5L155.2 178.4L157.5 178.6L159.7 178.7L162.0 178.8M146.3 174.5L142.5 175.3L143.3 177.1M109.4 168.4L111.8 168.6L114.1 169.4L116.6 168.3L119.0 168.1L121.3 169.9L123.7 170.5L126.1 169.3L128.5 169.6L130.6 168.9L132.5 167.5L135.0 165.4L135.9 162.4L133.5 161.5L130.9 162.7L128.5 161.7L126.0 161.5L123.7 161.9L121.3 162.8L118.9 162.8L116.6 161.5L114.5 163.7L111.7 164.9L111.5 167.5L109.4 168.4M120.2 158.0L123.1 157.5L125.9 157.8L128.6 158.9L130.9 157.5L133.5 156.9L136.2 157.2L132.4 155.4L129.9 155.3L127.3 154.8L124.8 155.1L122.3 156.3L120.2 158.0M149.5 158.9L151.8 158.8L154.2 159.3L156.5 159.7L158.8 157.7L161.1 159.3L163.4 158.9L164.8 155.8L162.4 154.6L159.9 154.8L157.4 154.8L154.9 155.4L152.3 157.2L149.5 158.9M154.9 155.4L156.9 154.2L159.4 155.5L161.4 153.8L163.8 154.7L166.0 154.8L167.9 152.8L170.1 152.5L172.5 153.6L174.5 152.0L176.9 151.8L178.7 149.6L180.9 148.7L183.1 148.0L186.1 149.3L188.2 148.3L189.9 145.7L192.4 145.9L190.3 144.5L188.0 143.5L185.3 144.2L183.0 143.9L180.8 144.9L178.5 144.4L176.3 145.7L174.0 146.2L171.6 143.6L169.4 145.1L166.9 145.3L164.7 146.3L162.0 145.8L160.0 147.7L158.8 150.3L157.3 152.8L154.9 155.4M135.1 163.2L139.2 164.1L141.9 163.2L143.4 160.6L141.0 159.7L138.7 160.6L135.1 163.2M143.1 162.4L145.8 162.0L148.3 163.2L149.2 161.1L151.1 159.8L148.2 160.3L145.3 159.8L143.1 162.4M150.7 152.8L153.1 151.9L155.5 152.7L157.9 151.5L160.3 152.0L161.0 149.7L162.0 147.7L159.2 149.1L156.0 148.5L153.5 149.1L152.8 151.7L150.7 152.8M133.4 154.6L135.8 154.3L138.2 154.5L140.7 155.2L143.0 153.7L145.4 153.7L144.0 152.0L141.2 151.0L138.5 152.4L135.8 152.5L133.1 152.8L133.4 154.6M145.5 363.8L147.1 365.8L147.7 368.3L148.6 370.7L147.8 374.1L149.8 375.3L152.0 376.1L153.8 377.6L156.3 378.1M247.3 225.5L246.2 224.1L244.5 223.4L242.1 223.7L242.3 220.8L241.2 220.6L242.3 217.7L242.6 215.1L241.9 213.4L243.9 212.1L246.4 210.9L248.6 212.5L250.9 211.8L253.2 212.8L254.0 212.3L254.5 208.2L253.0 206.3L249.5 204.9L249.2 203.8L251.8 203.3L253.9 203.5L253.9 201.8L256.3 202.1L258.5 200.9L260.0 199.4L262.2 198.7L263.1 196.2L265.7 195.4L268.6 194.9L268.7 192.6L267.7 189.8L268.2 189.0L271.0 187.9L270.9 190.5L271.5 191.7L270.3 192.8L270.7 193.8L272.9 194.2L275.7 193.5L277.2 194.5L279.1 192.2L282.1 193.0L284.3 193.6L286.1 191.4L286.0 189.3L287.3 188.1L290.4 188.8L288.7 185.7L292.0 184.8L294.8 185.5L297.4 184.1L294.4 184.5L291.7 183.3L289.6 184.9L287.1 184.0L285.0 181.4L284.8 178.8L286.7 176.8L288.8 175.3L289.2 174.1L287.0 172.5L284.7 173.9L284.1 176.4L281.2 177.1L279.7 179.6L279.7 182.2L282.1 184.8L281.2 185.2L279.5 189.2L278.9 190.5L276.5 191.9L274.5 191.9L274.5 190.0L272.7 187.4L271.5 185.7L270.7 184.1L269.4 185.7L267.4 187.3L264.6 187.1L263.9 185.2L263.1 182.2L263.3 180.5L265.6 179.1L269.4 177.1L271.8 174.5L274.0 171.0L276.3 169.3L279.7 166.7L281.9 165.4L284.4 165.8M291.0 165.1L294.3 166.2L297.2 167.7L301.1 168.4L303.9 168.1L305.3 171.6L308.2 171.0L307.6 173.1L305.3 174.4L303.4 176.2L301.8 176.2L305.0 177.4L308.6 176.2L310.1 172.7M314.0 224.1L311.6 224.1L308.5 225.3L305.3 224.9L302.0 224.2L299.7 222.9L298.3 220.3L297.6 217.9L298.0 217.7L301.8 216.5L304.9 216.6L307.8 215.1L310.9 215.1L314.3 216.6L316.7 217.9L319.1 216.8L321.5 215.8L319.6 213.6L317.3 211.6L313.9 209.9L314.8 207.3L313.9 206.4L311.6 206.6L309.6 207.7L312.2 209.4L309.9 209.6L307.9 210.8L306.1 209.4L306.6 208.2L303.1 207.3L301.8 209.4L300.6 210.8L299.4 213.0L300.0 215.1L301.8 216.5M247.3 225.5L249.2 224.2L253.1 224.2L255.2 222.7L256.6 220.6L255.8 219.4L257.6 217.3L261.3 215.3L261.1 213.4L263.7 212.8L265.6 213.2L267.9 212.0L269.9 210.9L271.7 211.6L272.6 213.5L275.5 215.6L278.3 217.2L280.9 218.5L281.7 221.1L281.1 222.0L282.7 221.3L283.6 220.3L282.4 219.1L283.5 217.7L285.5 218.4L284.6 217.5L281.7 216.0L278.9 214.6L277.2 212.3L275.2 210.8L275.1 209.2L277.2 208.9L277.2 210.1L279.4 210.8L281.8 212.5L285.1 214.4L286.8 215.4L287.0 217.7L289.6 220.3L290.6 222.9L292.4 224.8L293.0 222.9L294.5 222.0L292.8 220.3L291.9 217.7L294.0 217.2L297.1 217.0L297.6 217.9M273.1 223.7L269.9 223.7L267.7 223.2L265.6 225.5L263.3 223.1L261.1 224.1M247.8 201.1L251.9 200.0L254.1 200.9L256.3 199.9L258.4 199.2L258.8 196.6L256.7 195.7L256.2 194.3L254.2 192.6L253.5 190.9L253.8 188.1L251.7 186.4L249.4 186.4L247.6 188.3L248.4 190.4L249.1 192.6L251.3 192.8L251.7 194.3L252.0 195.4L249.8 195.5L249.7 197.5L248.7 198.3L251.9 198.8L249.7 199.5L247.8 201.1M247.5 197.8L247.4 194.5L248.4 193.3L245.9 191.9L244.1 193.5L241.9 194.0L241.8 196.1L241.2 198.1L244.6 198.5L247.1 197.5L247.5 197.8M276.0 221.8L278.7 222.9L281.1 221.5L280.5 224.2L277.7 224.6L276.1 222.3L276.0 221.8M269.2 216.8L271.7 216.8L271.5 219.9L269.6 220.3L269.2 216.8M269.7 213.5L271.0 213.4L271.0 216.1L269.9 215.4L269.7 213.5M165.8 409.9L166.0 407.5L166.9 405.4L168.0 403.4L170.2 402.0M174.4 402.7L171.7 402.6L170.4 405.2L168.1 405.8L167.9 408.2L165.0 409.3L164.5 411.6L164.2 413.9L166.9 414.2L167.8 417.1L170.0 418.1M253.5 212.7L255.5 213.9L257.9 213.9L261.3 214.4M242.6 215.1L246.1 215.4L245.2 219.4L244.5 223.4M260.0 199.4L262.5 201.4L264.9 202.1L268.6 203.0L267.8 205.4L265.4 207.8L267.0 209.0L267.9 212.0M266.4 195.5L265.1 198.1L265.2 199.9L265.4 201.1L264.9 202.1M261.3 199.0L264.9 199.9M268.8 192.8L270.5 193.0M276.9 194.5L277.8 197.8L278.4 199.5M278.4 199.5L274.5 200.7L277.0 203.3M277.0 203.3L275.9 205.6L272.2 205.9L270.7 205.6L267.8 205.4M270.7 205.6L272.2 206.8L270.0 208.3L267.0 208.3L265.4 207.8M272.2 206.8L275.3 206.6L277.1 207.3L277.2 208.9M278.4 199.5L281.8 199.8L284.3 202.1L287.2 201.8L289.9 202.8M289.9 202.8L291.8 200.4L290.7 197.8L290.2 194.5L289.1 193.6L286.7 194.7L284.3 193.6M277.0 203.3L278.7 203.0L281.7 203.7L284.3 202.1M281.7 203.7L281.2 205.6L280.6 207.0L277.1 207.3M280.6 207.0L283.0 208.2L285.0 208.3L288.3 207.8L290.6 204.7L289.5 204.0L286.8 203.5L284.6 205.1L281.7 203.7M277.2 208.9L279.9 207.3L280.6 207.0M280.1 209.6L282.4 209.6L285.5 209.9L286.4 211.6L286.3 213.4L285.1 214.4M285.3 208.3L287.2 208.0L289.3 209.9L291.3 211.3L291.2 214.6L289.1 215.1L287.4 214.2L286.3 213.4M287.2 208.0L289.1 206.5L290.8 204.7L293.4 202.9L296.3 204.2L298.9 205.1L299.3 207.8L301.8 209.4M291.3 211.3L293.8 211.0L296.3 211.7L298.7 211.6L300.5 212.1M287.9 219.1L289.3 217.2L292.3 216.3L294.7 216.4L297.0 215.6L297.5 217.2M286.8 215.4L288.3 214.9L289.3 217.2M297.3 215.6L300.0 215.1M291.2 214.6L292.3 216.3M290.8 198.7L293.8 197.2L296.7 198.7L299.0 197.6L301.2 199.0L303.8 197.3L307.5 197.5M307.5 197.5L309.7 199.9L312.8 201.3L316.0 202.1L315.4 204.3L314.2 206.3M290.2 194.5L293.0 193.8L294.1 191.4L296.3 190.9L299.2 191.5L301.5 193.5L302.6 195.2L303.8 197.3M286.0 190.7L288.8 190.2L291.3 192.8L294.1 191.4M290.2 187.8L292.6 187.4L294.8 188.3L295.9 190.5M294.5 185.0L294.8 188.3M294.1 183.1L296.1 181.4L296.1 178.8L295.4 176.1L294.3 173.6L292.2 170.1L292.2 168.4L292.0 166.7M287.3 173.9L286.0 171.0L283.7 170.1L281.9 168.4L285.1 167.4L288.4 167.0L292.2 168.4M281.9 168.4L278.8 169.3L276.2 170.6L275.6 173.6L272.6 174.3L272.4 177.4L273.2 179.8L273.0 182.2L271.7 185.5M292.0 166.7L294.6 167.2M296.3 204.2L299.2 204.7L301.9 207.3L299.3 207.8M313.9 209.9L316.6 210.3L318.2 212.5M320.4 224.1L317.9 222.8L315.6 224.4M70.6 184.3L71.2 186.6L71.3 190.9L69.9 193.1" fill="none" stroke="#bebebe" stroke-width="3" stroke-linejoin="round" stroke-linecap="round"/>
<g fill="#000"><circle cx="85.7" cy="199.4" r="3.3"/><circle cx="70.3" cy="202.4" r="3.3"/><circle cx="69.6" cy="205.4" r="3.3"/><circle cx="89.7" cy="219.0" r="3.3"/><circle cx="60.5" cy="222.4" r="3.3"/><circle cx="64.6" cy="228.7" r="3.3"/><circle cx="65.4" cy="231.2" r="3.3"/><circle cx="98.4" cy="230.7" r="3.3"/><circle cx="99.2" cy="236.3" r="3.3"/><circle cx="112.6" cy="220.9" r="3.3"/><circle cx="118.6" cy="214.9" r="3.3"/><circle cx="119.7" cy="219.0" r="3.3"/><circle cx="125.8" cy="226.7" r="3.3"/><circle cx="121.8" cy="237.9" r="3.3"/><circle cx="123.0" cy="243.0" r="3.3"/><circle cx="132.4" cy="212.1" r="3.3"/><circle cx="139.3" cy="208.9" r="3.3"/><circle cx="142.6" cy="208.9" r="3.3"/><circle cx="144.9" cy="214.4" r="3.3"/><circle cx="133.8" cy="220.4" r="3.3"/><circle cx="136.6" cy="218.6" r="3.3"/><circle cx="139.3" cy="217.0" r="3.3"/><circle cx="249.9" cy="190.9" r="3.3"/><circle cx="253.1" cy="196.7" r="3.3"/><circle cx="255.9" cy="198.6" r="3.3"/><circle cx="259.6" cy="203.2" r="3.3"/><circle cx="276.2" cy="197.0" r="3.3"/><circle cx="273.9" cy="204.4" r="3.3"/><circle cx="265.6" cy="207.8" r="3.3"/><circle cx="270.2" cy="209.2" r="3.3"/><circle cx="264.6" cy="212.7" r="3.3"/><circle cx="251.3" cy="212.7" r="3.3"/><circle cx="259.6" cy="216.1" r="3.3"/><circle cx="275.7" cy="215.2" r="3.3"/><circle cx="440.0" cy="218.5" r="3.3"/><circle cx="454.2" cy="233.6" r="3.3"/><circle cx="445.1" cy="247.6" r="3.3"/><circle cx="474.7" cy="227.7" r="3.3"/><circle cx="480.9" cy="225.9" r="3.3"/></g>
</svg>
<div class="abs" style="left:86px;top:107px;width:6px;height:1px;background:#a0a0a0"></div>
<div class="abs" style="left:86px;top:151px;width:6px;height:1px;background:#a0a0a0"></div>
<div class="abs" style="left:86px;top:194px;width:6px;height:1px;background:#a0a0a0"></div>
<div class="abs" style="left:86px;top:237px;width:6px;height:1px;background:#a0a0a0"></div>
<div class="abs" style="left:86px;top:280px;width:6px;height:1px;background:#a0a0a0"></div>
<div class="abs" style="left:86px;top:323px;width:6px;height:1px;background:#a0a0a0"></div>
<div class="abs" style="left:86px;top:367px;width:6px;height:1px;background:#a0a0a0"></div>
<div class="abs" style="left:86px;top:410px;width:6px;height:1px;background:#a0a0a0"></div>
<div class="abs" style="left:86px;top:453px;width:6px;height:1px;background:#a0a0a0"></div>
<div class="abs" style="left:86px;top:496px;width:6px;height:1px;background:#a0a0a0"></div>
<div class="abs" style="left:92px;top:517px;width:1px;height:6px;background:#a0a0a0"></div>
<div class="abs" style="left:178px;top:517px;width:1px;height:6px;background:#a0a0a0"></div>
<div class="abs" style="left:264px;top:517px;width:1px;height:6px;background:#a0a0a0"></div>
<div class="abs" style="left:349px;top:517px;width:1px;height:6px;background:#a0a0a0"></div>
<div class="abs" style="left:435px;top:517px;width:1px;height:6px;background:#a0a0a0"></div>
<div class="abs" style="left:521px;top:517px;width:1px;height:6px;background:#a0a0a0"></div>
<div class="abs" style="left:606px;top:517px;width:1px;height:6px;background:#a0a0a0"></div>
<div class="yl" style="left:45px;top:101px">150</div>
<div class="yl" style="left:45px;top:145px">125</div>
<div class="yl" style="left:45px;top:188px">100</div>
<div class="yl" style="left:45px;top:231px">75</div>
<div class="yl" style="left:45px;top:274px">50</div>
<div class="yl" style="left:45px;top:317px">25</div>
<div class="yl" style="left:45px;top:361px">0</div>
<div class="yl" style="left:45px;top:404px">-25</div>
<div class="yl" style="left:45px;top:447px">-50</div>
<div class="yl" style="left:45px;top:490px">-75</div>
<div class="xl" style="left:75px;top:525px">-150</div>
<div class="xl" style="left:158px;top:525px">-100</div>
<div class="xl" style="left:244px;top:525px">-50</div>
<div class="xl" style="left:329px;top:525px">0</div>
<div class="xl" style="left:415px;top:525px">50</div>
<div class="xl" style="left:501px;top:525px">100</div>
<div class="xl" style="left:586px;top:525px">150</div>
<div class="abs" style="left:321px;top:541px;font-size:12px;color:#000">Longitude</div>
<div class="abs" style="left:24px;top:291px;width:42px;font-size:12px;color:#000;transform:rotate(-90deg);transform-origin:21px 7px;white-space:nowrap">Latitude</div>
<svg class="abs" style="left:0;top:0" width="633" height="597">
<path d="M340.5 205.1 Q340.5 197.1 348.5 197.1 L390.5 197.1 Q398.5 197.1 398.5 205.1 L398.5 232.5 Q398.5 240.5 390.5 240.5 L365.5 240.5 L345.5 265 L350.8 240.5 L348.5 240.5 Q340.5 240.5 340.5 232.5 Z" fill="#ffff00" stroke="#0000ff" stroke-width="3" stroke-linejoin="miter" stroke-miterlimit="10"/>
</svg>
<div class="abs" style="left:340px;top:199px;width:58px;text-align:center;font-size:15px;font-weight:bold;color:#0000ff;line-height:18.5px;-webkit-text-stroke:0.3px #0000ff">Study<br>Sites</div>

<div class="btn" style="left:489px;line-height:20px;border-color:#2d8fd5;box-shadow:inset 0 0 0 1px #9adcf8;background:linear-gradient(180deg,#eaf6fd 0%,#d9f0fc 50%,#bee6fd 51%,#a7d9f5 100%);">OK</div>
<div class="btn" style="left:553px;line-height:20px;background:linear-gradient(180deg,#f2f2f2 0%,#ebebeb 50%,#dddddd 51%,#cfcfcf 100%);">Help</div>
</body></html>
